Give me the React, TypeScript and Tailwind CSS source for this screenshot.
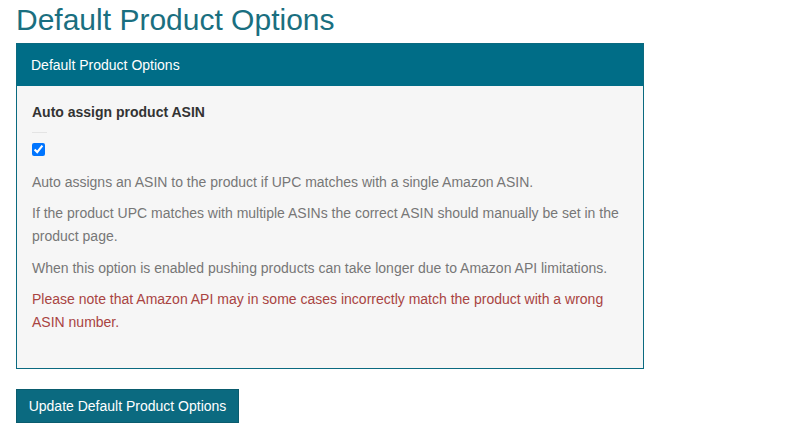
export default function App() {
  return (
    <div className="min-h-[434px] bg-white px-4 font-['Liberation_Sans',Arial,sans-serif]">
      <h1 className="text-[30px] leading-[39px] text-[#1a6f80]">Default Product Options</h1>

      <div className="mt-[4px] w-[628px] border border-[#0b6a80]">
        <div className="flex h-[42px] items-center bg-[#006d87] px-[14px] text-[14px] text-white">
          Default Product Options
        </div>
        <div className="bg-[#f6f6f6] px-[15px] pt-[16px] pb-[34px]">
          <div className="text-[14px] font-bold leading-[20px] text-[#333]">Auto assign product ASIN</div>
          <hr className="mt-[10px] w-[15px] border-t border-[#e4e4e4]" />
          <div className="mt-[8px] flex h-[16px] items-center">
            <input type="checkbox" defaultChecked className="m-0 h-[13px] w-[13px] accent-[#0075ff]" />
          </div>
          <div className="mt-[14px] space-y-[8px] text-[14px] leading-[23px] text-[#777]">
            <p>Auto assigns an ASIN to the product if UPC matches with a single Amazon ASIN.</p>
            <p>
              If the product UPC matches with multiple ASINs the correct ASIN should manually be set in the
              product page.
            </p>
            <p className="pt-[1px]">When this option is enabled pushing products can take longer due to Amazon API limitations.</p>
            <p className="text-[#a94442]">
              Please note that Amazon API may in some cases incorrectly match the product with a wrong ASIN number.
            </p>
          </div>
        </div>
      </div>

      <button className="mt-[20px] h-[34px] w-[223px] border border-[#0a5c6e] bg-[#0b6a80] text-[14px] text-white">
        Update Default Product Options
      </button>
    </div>
  )
}
